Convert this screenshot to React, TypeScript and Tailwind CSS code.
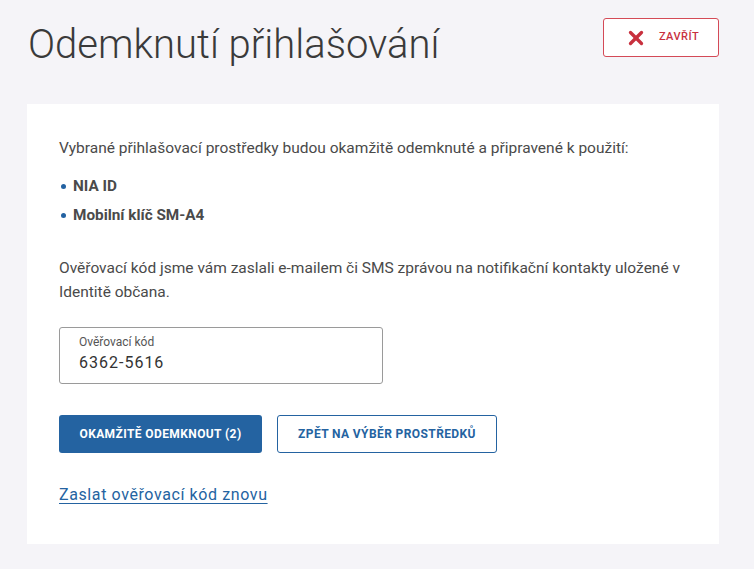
import { X } from 'lucide-react';

export default function App() {
  return (
    <div className="min-h-[569px] bg-[#f5f4f8] font-['Roboto',sans-serif] text-[#404040]">
      <div className="flex items-start justify-between pl-[28px] pr-[35px] pt-[18px]">
        <h1 className="pt-[2px] text-[40px] font-light leading-[50px] text-[#3a3a3a]">Odemknutí přihlašování</h1>
        <button className="flex h-[39px] w-[116px] items-center justify-center gap-[12px] rounded-[3px] border border-[#d44a57] bg-white pl-[2px] text-[11px] font-medium tracking-[0.5px] text-[#c8303e]">
          <X size={22} strokeWidth={3.6} className="text-[#c8303e]" />
          ZAVŘÍT
        </button>
      </div>

      <div className="ml-[27px] mr-[35px] mt-[34px] bg-white px-[32px] pb-[37px] pt-[32px]">
        <p className="text-[15.5px] leading-[24px] text-[#4a4a4a]">
          Vybrané přihlašovací prostředky budou okamžitě odemknuté a připravené k použití:
        </p>
        <ul className="mt-[14px] space-y-[5px]">
          {['NIA ID', 'Mobilní klíč SM-A4'].map((item) => (
            <li key={item} className="flex items-center text-[15.3px] font-bold leading-[24px] text-[#4a4a4a]">
              <span className="ml-[2px] mr-[7px] h-[5px] w-[5px] rounded-full bg-[#2362a2]" />
              {item}
            </li>
          ))}
        </ul>
        <p className="mt-[29px] text-[15.5px] leading-[24px] text-[#4a4a4a]">
          Ověřovací kód jsme vám zaslali e-mailem či SMS zprávou na notifikační kontakty uložené v Identitě občana.
        </p>

        <div className="mt-[23px] h-[57px] w-[324px] rounded-[3px] border border-[#9a9a9a] px-[19px] pt-[7px]">
          <div className="text-[12px] leading-[14px] text-[#555]">Ověřovací kód</div>
          <div className="mt-[3px] text-[16px] leading-[22px] tracking-[1px] text-[#333]">6362-5616</div>
        </div>

        <div className="mt-[31px] flex gap-[15px]">
          <button className="h-[38px] w-[203px] rounded-[3px] bg-[#2463a1] text-[12px] font-bold tracking-[0.4px] text-white">
            OKAMŽITĚ ODEMKNOUT (2)
          </button>
          <button className="h-[38px] w-[220px] rounded-[3px] border border-[#2463a1] bg-white text-[12px] font-bold tracking-[0.4px] text-[#2463a1]">
            ZPĚT NA VÝBĚR PROSTŘEDKŮ
          </button>
        </div>

        <a href="#" className="mt-[32px] inline-block text-[16px] leading-[20px] tracking-[0.6px] text-[#2463a1] underline underline-offset-[3px]">
          Zaslat ověřovací kód znovu
        </a>
      </div>
    </div>
  );
}
